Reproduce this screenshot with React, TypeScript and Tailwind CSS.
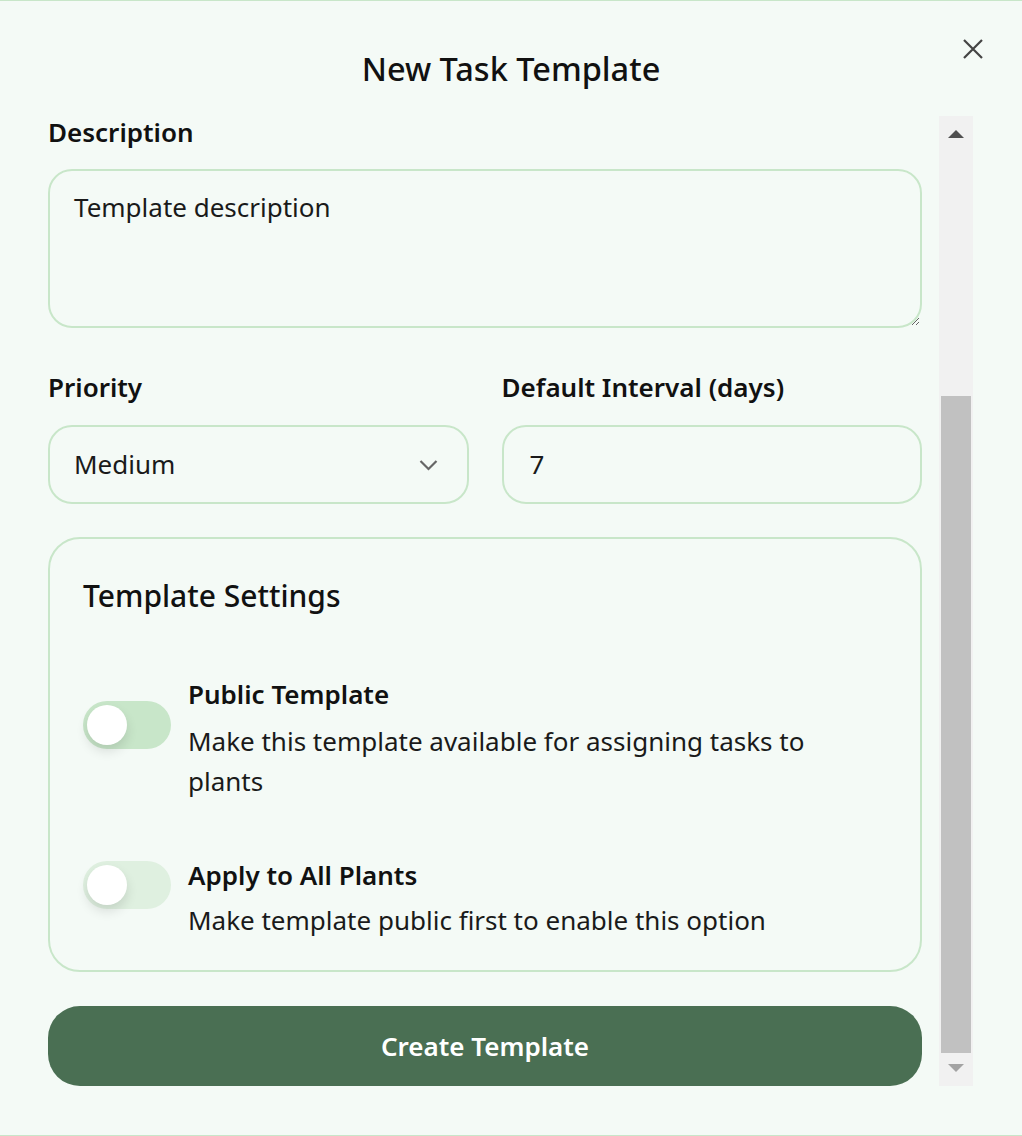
const font = { fontFamily: '"Noto Sans", "Open Sans", sans-serif' };

function Toggle({ disabled }: { disabled?: boolean }) {
  return (
    <div
      className={
        "relative h-[48px] w-[88px] shrink-0 rounded-full " +
        (disabled ? "bg-[#dff0e0]" : "bg-[#c8e6c9]")
      }
    >
      <div className="absolute left-[4px] top-[4px] h-[40px] w-[40px] rounded-full bg-white shadow-[0_6px_12px_rgba(0,0,0,0.12)]" />
    </div>
  );
}

function Scrollbar() {
  return (
    <div className="flex w-[34px] shrink-0 flex-col bg-[#f1f1f1]">
      <div className="flex h-[34px] items-start justify-center pt-[14px]">
        <div className="h-0 w-0 border-x-[8px] border-b-[8px] border-x-transparent border-b-[#505050]" />
      </div>
      <div className="flex flex-1 flex-col px-[2px] pt-[246px]">
        <div className="flex-1 bg-[#c1c1c1]" />
      </div>
      <div className="flex h-[33px] items-start justify-center pt-[11px]">
        <div className="h-0 w-0 border-x-[8px] border-t-[8px] border-x-transparent border-t-[#a3a3a3]" />
      </div>
    </div>
  );
}

export default function App() {
  return (
    <div
      style={font}
      className="flex h-[1136px] w-full flex-col border-y border-[#c8e6c9] bg-[#f4faf6] text-[#111]"
    >
      <header className="relative flex h-[115px] items-start justify-center pt-[46px]">
        <h1 className="text-[32.5px] font-medium leading-[44px]">New Task Template</h1>
        <button className="absolute right-[39px] top-[38px]">
          <svg width="20" height="20" viewBox="0 0 20 20" fill="none" stroke="#444" strokeWidth="2.2">
            <path d="M1 1l18 18M19 1L1 19" />
          </svg>
        </button>
      </header>

      <div className="flex gap-[17px] pl-[48px]">
        <div className="flex w-[874px] flex-col">
          <label className="mb-[21px] text-[26px] font-semibold leading-[32px]">Description</label>
          <textarea
            defaultValue="Template description"
            className="h-[159px] w-full rounded-[24px] border-2 border-[#c8e6c9] bg-transparent px-[24px] pt-[20px] text-[26px] leading-[32px] text-[#1a1a1a] outline-none"
          />

          <div className="mt-[43px] grid grid-cols-2 gap-[33px]">
            <div className="flex flex-col">
              <label className="mb-[22px] text-[26px] font-semibold leading-[32px]">Priority</label>
              <div className="flex h-[79px] items-center justify-between rounded-[24px] border-2 border-[#c8e6c9] pl-[24px] pr-[29px] text-[26px] text-[#1a1a1a]">
                <span>Medium</span>
                <svg width="19" height="12" viewBox="0 0 19 12" fill="none" stroke="#666" strokeWidth="2.2">
                  <path d="M1.5 2l8 8 8-8" />
                </svg>
              </div>
            </div>
            <div className="flex flex-col">
              <label className="mb-[22px] text-[26px] font-semibold leading-[32px]">
                Default Interval (days)
              </label>
              <div className="flex h-[79px] items-center rounded-[24px] border-2 border-[#c8e6c9] px-[26px] text-[26px] text-[#1a1a1a]">
                7
              </div>
            </div>
          </div>

          <section className="mt-[33px] flex flex-col rounded-[32px] border-2 border-[#c8e6c9] px-[33px] pb-[30px] pt-[39px]">
            <h2 className="text-[30px] font-medium leading-[36px]">Template Settings</h2>

            <div className="mt-[60px] flex items-start gap-[17px]">
              <div className="mt-[27px]">
                <Toggle />
              </div>
              <div className="flex max-w-[680px] flex-col">
                <p className="text-[26px] font-semibold leading-[40px]">Public Template</p>
                <p className="mt-[7px] text-[26px] leading-[40px] text-[#1a1a1a]">
                  Make this template available for assigning tasks to plants
                </p>
              </div>
            </div>

            <div className="mt-[54px] flex items-start gap-[17px]">
              <div className="mt-[6px]">
                <Toggle disabled />
              </div>
              <div className="flex max-w-[680px] flex-col">
                <p className="text-[26px] font-semibold leading-[40px]">Apply to All Plants</p>
                <p className="mt-[5px] text-[26px] leading-[40px] text-[#1a1a1a]">
                  Make template public first to enable this option
                </p>
              </div>
            </div>
          </section>

          <button className="mt-[34px] h-[80px] rounded-[32px] bg-[#4a6f53] text-[26px] font-semibold text-white">
            Create Template
          </button>
        </div>
        <Scrollbar />
      </div>
    </div>
  );
}
